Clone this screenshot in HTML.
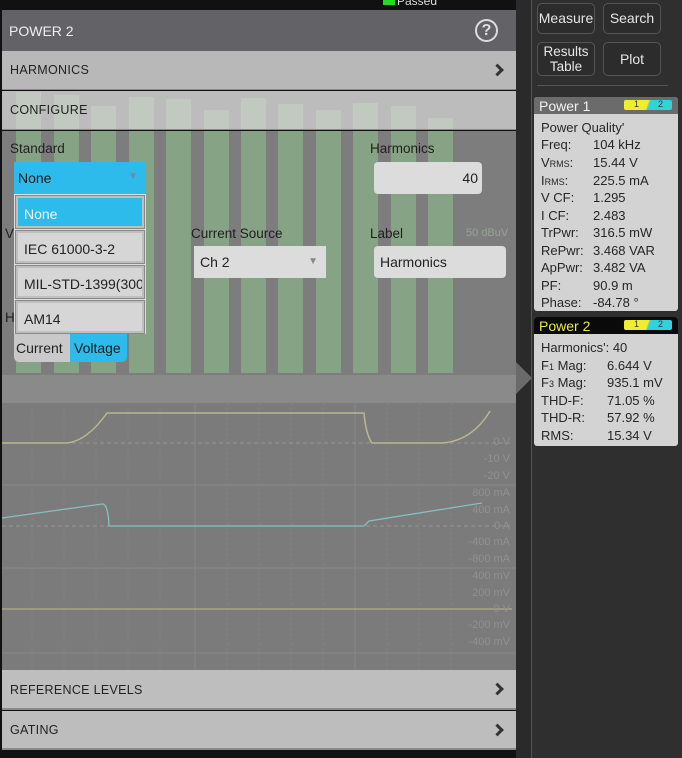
<!DOCTYPE html>
<html><head><meta charset="utf-8"><style>
*{margin:0;padding:0;box-sizing:border-box}
body{width:682px;height:758px;overflow:hidden;background:#2f2f2f;font-family:"Liberation Sans","DejaVu Sans",sans-serif;position:relative}
.a{position:absolute}
.bar{position:absolute;width:25px;background:#87a386}
.barl{position:absolute;width:25px;background:#c1c9c0}
.row{position:absolute;left:2px;width:514px;font-size:12.5px;color:#222;padding-left:8px;letter-spacing:.3px}
.chev{position:absolute;right:14px;top:50%;width:9px;height:9px;border-top:3px solid #333;border-right:3px solid #333;transform:translateY(-50%) rotate(45deg)}
.lbl{position:absolute;font-size:13.5px;color:#1e1e1e}
.box{position:absolute;background:#dcdcdc;border-radius:4px;font-size:14px;color:#222;padding-left:6px}
.opt{position:absolute;left:16px;width:128px;height:32px;background:#d6d6d6;border:2px solid #bfbfbf;outline:1px solid #888;font-size:14px;color:#222;padding:8px 0 0 6px;white-space:nowrap;overflow:hidden}
.btn{position:absolute;width:58px;height:31px;border:1px solid #555;border-radius:5px;background:#2c2c2c;color:#e6e6e6;font-size:14px;text-align:center}
.card{position:absolute;left:534px;width:144px;background:#d3d3d3;border-radius:3px;font-size:13px;color:#262626}
.ln{position:absolute;left:7px;white-space:nowrap}
.v{position:absolute;white-space:nowrap}
.badge{position:absolute;right:6px;top:3px;width:48px;height:10px;background:linear-gradient(110deg,#f0ee2a 0 48%,#2fd3dc 52%);border-radius:2px;font-size:9px;color:#333}
.grid{position:absolute;color:#919191;font-size:11px;width:60px;text-align:right;left:450px}
</style></head><body>
<div class="a" style="left:0;top:0;width:518px;height:758px;background:#111"></div>
<div class="a" style="left:383px;top:0;width:12px;height:5px;background:#2d2"></div>
<div class="a" style="left:397px;top:-6px;font-size:12px;color:#ddd">Passed</div>
<div class="a" style="left:2px;top:10px;width:514px;height:41px;background:#636266"></div>
<div class="a" style="left:9px;top:23px;font-size:14px;color:#eee">POWER 2</div>
<div class="a" style="left:475px;top:19px;width:23px;height:23px;border:2px solid #ddd;border-radius:50%;color:#ddd;font-size:16px;font-weight:bold;text-align:center;line-height:19px">?</div>
<div class="row" style="top:51px;height:39px;background:#b8b8b8;line-height:39px;border-bottom:1px solid #8a8a8a">HARMONICS<div class="chev"></div></div>
<div class="a" style="left:2px;top:91px;width:514px;height:39px;background:#bcbcbc"></div>
<div class="barl" style="left:16px;top:92px;height:38px"></div><div class="barl" style="left:54px;top:95px;height:35px"></div><div class="barl" style="left:91px;top:106px;height:24px"></div><div class="barl" style="left:129px;top:97px;height:33px"></div><div class="barl" style="left:166px;top:99px;height:31px"></div><div class="barl" style="left:204px;top:110px;height:20px"></div><div class="barl" style="left:241px;top:98px;height:32px"></div><div class="barl" style="left:278px;top:104px;height:26px"></div><div class="barl" style="left:316px;top:110px;height:20px"></div><div class="barl" style="left:353px;top:103px;height:27px"></div><div class="barl" style="left:391px;top:106px;height:24px"></div><div class="barl" style="left:428px;top:118px;height:12px"></div>
<div class="row" style="top:91px;height:39px;line-height:39px;background:transparent;border-bottom:1px solid #8a8a8a">CONFIGURE</div>
<div class="a" style="left:2px;top:131px;width:514px;height:244px;background:#7d7d7d"></div>
<div class="bar" style="left:16px;top:131px;height:242px"></div><div class="bar" style="left:54px;top:131px;height:242px"></div><div class="bar" style="left:91px;top:131px;height:242px"></div><div class="bar" style="left:129px;top:131px;height:242px"></div><div class="bar" style="left:166px;top:131px;height:242px"></div><div class="bar" style="left:204px;top:131px;height:242px"></div><div class="bar" style="left:241px;top:131px;height:242px"></div><div class="bar" style="left:278px;top:131px;height:242px"></div><div class="bar" style="left:316px;top:131px;height:242px"></div><div class="bar" style="left:353px;top:131px;height:242px"></div><div class="bar" style="left:391px;top:131px;height:242px"></div><div class="bar" style="left:428px;top:131px;height:242px"></div>
<div class="a" style="left:466px;top:227px;font-size:11px;color:#98a098">50 dBuV</div>
<div class="lbl" style="left:10px;top:141px">Standard</div>
<div class="lbl" style="left:370px;top:141px">Harmonics</div>
<div class="box" style="left:374px;top:162px;width:108px;height:32px;text-align:right;padding-right:4px;line-height:32px">40</div>
<div class="lbl" style="left:5px;top:226px">V</div>
<div class="lbl" style="left:5px;top:310px">H</div>
<div class="lbl" style="left:191px;top:226px">Current Source</div>
<div class="box" style="left:194px;top:246px;width:132px;height:32px;line-height:32px;border-radius:0">Ch 2<span style="position:absolute;right:8px;top:0;font-size:10px;color:#888">▼</span></div>
<div class="lbl" style="left:370px;top:226px">Label</div>
<div class="box" style="left:374px;top:246px;width:132px;height:32px;line-height:32px">Harmonics</div>
<div class="a" style="left:14px;top:162px;width:132px;height:32px;background:#2cbbea;font-size:14px;color:#1a1a1a;padding:8px 0 0 4px">None<span style="position:absolute;right:8px;top:9px;font-size:10px;color:#7a8a99">▼</span></div>
<div class="a" style="left:14px;top:194px;width:132px;height:140px;background:#ddd"></div>
<div class="opt" style="top:196px;background:#2cbbea;color:#f4f4f4">None</div>
<div class="opt" style="top:231px">IEC 61000-3-2</div>
<div class="opt" style="top:266px">MIL-STD-1399(300E</div>
<div class="opt" style="top:301px">AM14</div>
<div class="a" style="left:14px;top:334px;width:56px;height:28px;background:#c9c9c9;border-radius:0 0 0 5px;font-size:14px;color:#222;padding:6px 0 0 2px">Current</div>
<div class="a" style="left:70px;top:334px;width:57px;height:28px;background:#2cbbea;border-radius:0 0 5px 0;font-size:14px;color:#1a1a1a;padding:6px 0 0 4px">Voltage</div>
<div class="a" style="left:2px;top:375px;width:514px;height:28px;background:#8a8a8a"></div>
<div class="a" style="left:2px;top:403px;width:514px;height:267px;background:#7b7b7b"></div>
<svg class="a" style="left:2px;top:403px" width="514" height="350">
<g stroke="#858585" stroke-width="1" stroke-dasharray="2 3"><line x1="30" y1="0" x2="30" y2="267"/><line x1="62" y1="0" x2="62" y2="267"/><line x1="94" y1="0" x2="94" y2="267"/><line x1="126" y1="0" x2="126" y2="267"/><line x1="158" y1="0" x2="158" y2="267"/><line x1="225" y1="0" x2="225" y2="267"/><line x1="257" y1="0" x2="257" y2="267"/><line x1="289" y1="0" x2="289" y2="267"/><line x1="321" y1="0" x2="321" y2="267"/><line x1="385" y1="0" x2="385" y2="267"/><line x1="417" y1="0" x2="417" y2="267"/><line x1="449" y1="0" x2="449" y2="267"/></g>
<g stroke="#878787"><line x1="193" y1="0" x2="193" y2="267"/><line x1="353" y1="0" x2="353" y2="267"/><line x1="0" y1="82" x2="514" y2="82"/><line x1="0" y1="165" x2="514" y2="165"/><line x1="0" y1="250" x2="514" y2="250"/></g>
<g stroke="#959595" stroke-dasharray="4 3"><line x1="0" y1="40" x2="510" y2="40"/><line x1="0" y1="123" x2="510" y2="123"/></g>
<path d="M0 40 L65 40 Q85 38 105 10 L115 10 L362 10 Q364 32 370 40 L440 40 Q470 38 488 8" stroke="#b8b78f" stroke-width="1.5" fill="none"/>
<path d="M0 115 L100 101 Q106 100 107 123 L362 123 L367 118 L480 100" stroke="#86bfc0" stroke-width="1.3" fill="none"/>
<path d="M0 206 L510 206" stroke="#aeac88" stroke-width="1.2" fill="none"/>
</svg>
<div class="grid" style="top:436px">0 V</div>
<div class="grid" style="top:453px">-10 V</div>
<div class="grid" style="top:470px">-20 V</div>
<div class="grid" style="top:487px">800 mA</div>
<div class="grid" style="top:504px">400 mA</div>
<div class="grid" style="top:520px">0 A</div>
<div class="grid" style="top:536px">-400 mA</div>
<div class="grid" style="top:553px">-800 mA</div>
<div class="grid" style="top:570px">400 mV</div>
<div class="grid" style="top:587px">200 mV</div>
<div class="grid" style="top:603px">0 V</div>
<div class="grid" style="top:619px">-200 mV</div>
<div class="grid" style="top:636px">-400 mV</div>
<div class="row" style="top:670px;height:40px;line-height:40px;background:#bfbebf;border-bottom:2px solid #8a8a8a">REFERENCE LEVELS<div class="chev"></div></div>
<div class="row" style="top:711px;height:39px;line-height:39px;background:#bdbdbd;border-bottom:2px solid #8a8a8a">GATING<div class="chev"></div></div>
<div class="a" style="left:516px;top:0;width:16px;height:758px;background:#2a2a2a"></div>
<div class="a" style="left:531px;top:0;width:1px;height:758px;background:#555"></div>
<div class="a" style="left:516px;top:362px;width:0;height:0;border-top:16px solid transparent;border-bottom:16px solid transparent;border-left:16px solid #6a6a6a"></div>
<div class="btn" style="left:537px;top:3px;line-height:29px">Measure</div>
<div class="btn" style="left:603px;top:3px;line-height:29px">Search</div>
<div class="btn" style="left:537px;top:42px;height:34px;font-size:13.5px;line-height:15px;padding-top:1px">Results<br>Table</div>
<div class="btn" style="left:603px;top:42px;height:34px;line-height:32px">Plot</div>
<div class="a" style="left:537px;top:85px;width:131px;height:1px;background:#555"></div>
<div class="card" style="top:97px;height:214px">
<div class="a" style="left:0;top:0;width:144px;height:17px;background:#6b6b6b;border-radius:3px 3px 0 0"></div>
<div class="ln" style="left:5px;top:1px;color:#f2f2f2;font-size:14px">Power 1</div>
<div class="badge"><span style="position:absolute;left:10px;top:-1px">1</span><span style="position:absolute;left:34px;top:-1px">2</span></div>
<div class="ln" style="top:23px">Power Quality'</div>
<div class="ln" style="top:40px">Freq:</div><div class="v" style="left:59px;top:40px">104 kHz</div>
<div class="ln" style="top:58px">V<span style="font-size:9px">RMS</span>:</div><div class="v" style="left:59px;top:58px">15.44 V</div>
<div class="ln" style="top:76px">I<span style="font-size:9px">RMS</span>:</div><div class="v" style="left:59px;top:76px">225.5 mA</div>
<div class="ln" style="top:93px">V CF:</div><div class="v" style="left:59px;top:93px">1.295</div>
<div class="ln" style="top:111px">I CF:</div><div class="v" style="left:59px;top:111px">2.483</div>
<div class="ln" style="top:128px">TrPwr:</div><div class="v" style="left:59px;top:128px">316.5 mW</div>
<div class="ln" style="top:146px">RePwr:</div><div class="v" style="left:59px;top:146px">3.468 VAR</div>
<div class="ln" style="top:163px">ApPwr:</div><div class="v" style="left:59px;top:163px">3.482 VA</div>
<div class="ln" style="top:181px">PF:</div><div class="v" style="left:59px;top:181px">90.9 m</div>
<div class="ln" style="top:198px">Phase:</div><div class="v" style="left:59px;top:198px">-84.78 °</div>
</div>
<div class="card" style="top:317px;height:129px">
<div class="a" style="left:0;top:0;width:144px;height:17px;background:#0a0a0a;border-radius:3px 3px 0 0"></div>
<div class="ln" style="left:5px;top:1px;color:#e8e83a;font-size:14px">Power 2</div>
<div class="badge"><span style="position:absolute;left:10px;top:-1px">1</span><span style="position:absolute;left:34px;top:-1px">2</span></div>
<div class="ln" style="top:23px">Harmonics': 40</div>
<div class="ln" style="top:41px">F<span style="font-size:9px">1</span> Mag:</div><div class="v" style="left:73px;top:41px">6.644 V</div>
<div class="ln" style="top:58px">F<span style="font-size:9px">3</span> Mag:</div><div class="v" style="left:73px;top:58px">935.1 mV</div>
<div class="ln" style="top:76px">THD-F:</div><div class="v" style="left:73px;top:76px">71.05 %</div>
<div class="ln" style="top:93px">THD-R:</div><div class="v" style="left:73px;top:93px">57.92 %</div>
<div class="ln" style="top:111px">RMS:</div><div class="v" style="left:73px;top:111px">15.34 V</div>
</div>
</body></html>
